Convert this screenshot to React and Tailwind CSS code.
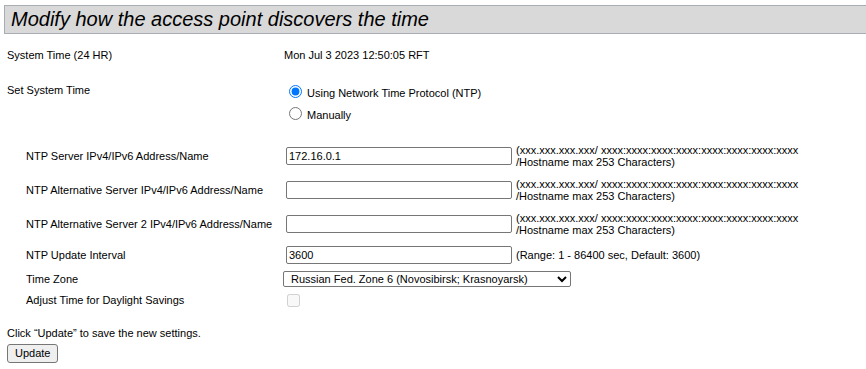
const HINT_ADDR = (
  <>
    (xxx.xxx.xxx.xxx/ xxxx:xxxx:xxxx:xxxx:xxxx:xxxx:xxxx:xxxx
    <br />
    /Hostname max 253 Characters)
  </>
)

function TextRow({ label, value, hint, twoLine }) {
  return (
    <div className={`flex items-center ${twoLine ? 'h-[24px]' : 'h-[18px]'}`}>
      <div className="w-[286px] pl-[26px] shrink-0">{label}</div>
      <input
        type="text"
        defaultValue={value}
        className="w-[226px] h-[18px] border border-[#767676] rounded-[2px] bg-white px-[2px] text-[11px] outline-none"
      />
      <div className="ml-[4px] leading-[12px]">{hint}</div>
    </div>
  )
}

export default function App() {
  return (
    <div className="w-[866px] h-[369px] overflow-hidden bg-white pt-[5px] font-['Liberation_Sans',Arial,sans-serif] text-[11px] leading-[13px] text-black">
      <div className="ml-[4px] h-[29px] border border-r-0 border-[#a9aeb4] bg-[#d9d9d9] pl-[6px] text-[20px] italic leading-[27px]">
        Modify how the access point discovers the time
      </div>

      <div className="flex pl-[7px] mt-[15px]">
        <div className="w-[277px]">System Time (24 HR)</div>
        <div>Mon Jul 3 2023 12:50:05 RFT</div>
      </div>

      <div className="flex pl-[7px] mt-[22px]">
        <div className="w-[277px]">Set System Time</div>
        <div className="flex flex-col gap-[6px]">
          <label className="flex items-start">
            <input type="radio" name="mode" defaultChecked className="m-0 ml-[5px] mt-[1px] w-[13px] h-[13px]" />
            <span className="ml-[5px] mt-[3px]">Using Network Time Protocol (NTP)</span>
          </label>
          <label className="flex items-start">
            <input type="radio" name="mode" className="m-0 ml-[5px] mt-[1px] w-[13px] h-[13px]" />
            <span className="ml-[5px] mt-[3px]">Manually</span>
          </label>
        </div>
      </div>

      <div className="flex flex-col gap-[10px] mt-[22px]">
        <TextRow label="NTP Server IPv4/IPv6 Address/Name" value="172.16.0.1" hint={HINT_ADDR} twoLine />
        <TextRow label="NTP Alternative Server IPv4/IPv6 Address/Name" value="" hint={HINT_ADDR} twoLine />
        <TextRow label="NTP Alternative Server 2 IPv4/IPv6 Address/Name" value="" hint={HINT_ADDR} twoLine />
        <TextRow label="NTP Update Interval" value="3600" hint="(Range: 1 - 86400 sec, Default: 3600)" />
      </div>

      <div className="flex items-center h-[18px] mt-[6px]">
        <div className="w-[283px] pl-[26px] shrink-0">Time Zone</div>
        <select
          defaultValue="ru6"
          className="w-[288px] h-[16px] border border-[#767676] rounded-[2px] bg-white pl-[3px] text-[11px] leading-[13px]"
        >
          <option value="ru6">Russian Fed. Zone 6 (Novosibirsk; Krasnoyarsk)</option>
        </select>
      </div>

      <div className="flex items-center h-[18px] mt-[3px]">
        <div className="w-[287px] pl-[26px] shrink-0">Adjust Time for Daylight Savings</div>
        <input type="checkbox" disabled className="m-0 w-[13px] h-[13px]" />
      </div>

      <div className="pl-[7px] mt-[18px]">Click “Update” to save the new settings.</div>
      <div className="pl-[7px] mt-[4px]">
        <button
          type="button"
          className="h-[19px] px-[7px] border border-[#767676] rounded-[3px] bg-[#efefef] text-[11px] leading-[13px]"
        >
          Update
        </button>
      </div>
    </div>
  )
}
